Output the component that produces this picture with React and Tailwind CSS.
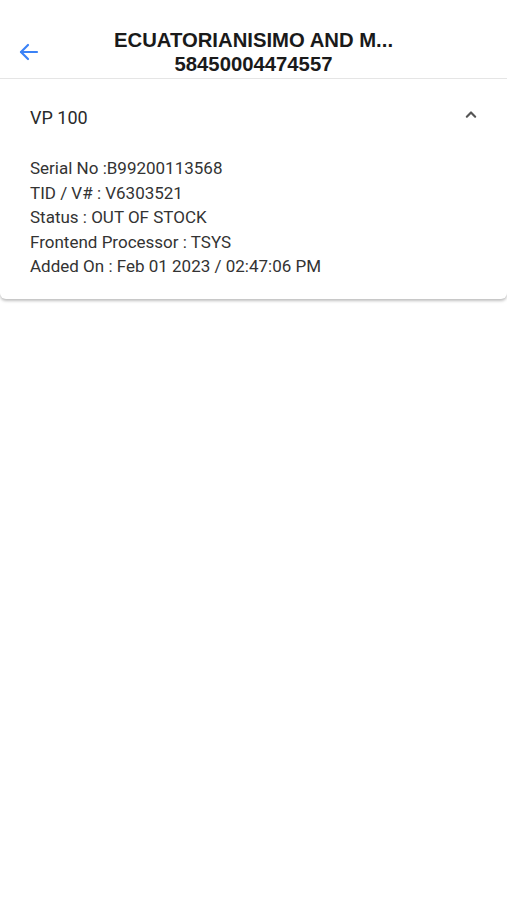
import React from 'react'

const App = () => {
  const rows = [
    'Serial No :B99200113568',
    'TID / V# : V6303521',
    'Status : OUT OF STOCK',
    'Frontend Processor : TSYS',
    'Added On : Feb 01 2023 / 02:47:06 PM',
  ]

  return (
    <main className="min-h-screen w-full bg-white">
      <header className="relative flex h-[79px] items-end justify-center border-b border-[#e5e5e5] pb-[2px]">
        <button className="absolute left-[16px] top-[40px] text-[#3b82f6]">
          <svg width="26" height="24" viewBox="0 0 24 24" fill="none" stroke="currentColor" strokeWidth="2.2" strokeLinecap="round" strokeLinejoin="round">
            <path d="M20 12H4" />
            <path d="M11 5l-7 7 7 7" />
          </svg>
        </button>
        <div className="text-center font-['Liberation_Sans',Arial,sans-serif] text-[20.3px] font-bold leading-[24px] text-[#1a1a1a]">
          <div>ECUATORIANISIMO AND M...</div>
          <div>58450004474557</div>
        </div>
      </header>

      <section className="rounded-b-md bg-white px-[30px] pb-[20px] pt-[26px] shadow-[0_2px_3px_rgba(0,0,0,0.25)] font-['Roboto',sans-serif] text-[#2a2a2a]">
        <div className="flex items-center justify-between">
          <h2 className="text-[18px] leading-[26px]">VP 100</h2>
          <svg className="mr-[-4px] mt-[-6px]" width="20" height="20" viewBox="0 0 24 24" fill="none" stroke="#555" strokeWidth="2.6" strokeLinecap="round" strokeLinejoin="round">
            <path d="M7 14l5-5 5 5" />
          </svg>
        </div>
        <div className="mt-[25px] text-[17px] leading-[24.5px] text-[#333]">
          {rows.map((r) => (
            <p key={r}>{r}</p>
          ))}
        </div>
      </section>
    </main>
  )
}

export default App
